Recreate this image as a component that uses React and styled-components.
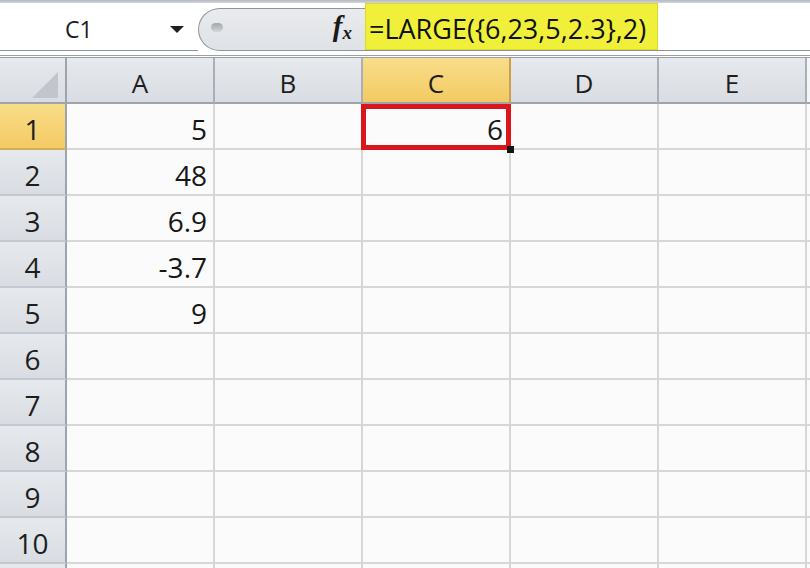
import React from 'react';
import styled, { createGlobalStyle } from 'styled-components';

const GlobalStyle = createGlobalStyle`
  html, body {
    margin: 0;
    padding: 0;
    background: #fff;
  }
  body {
    font-family: "Open Sans", "Liberation Sans", sans-serif;
    overflow: hidden;
  }
`;

const Window = styled.div`
  width: 810px;
  height: 568px;
  overflow: hidden;
  background: #fbfbfb;
  display: flex;
  flex-direction: column;
`;

const TopStrip = styled.div`
  flex: none;
  height: 3px;
  background: linear-gradient(#b4b9c0, #d3d7dc);
`;

const FormulaBar = styled.div`
  flex: none;
  display: flex;
  height: 48px;
  background: #fff;
`;

const NameBox = styled.div`
  width: 198px;
  box-sizing: border-box;
  display: flex;
  align-items: center;
  justify-content: space-between;
  padding: 5px 14px 0 65px;
  border-bottom: 1px solid #8e949b;
  font-size: 23px;
  color: #1c1c1c;
`;

const Arrow = styled.span`
  width: 0;
  height: 0;
  border-left: 7px solid transparent;
  border-right: 7px solid transparent;
  border-top: 7px solid #202020;
`;

const FxArea = styled.div`
  width: 167px;
  box-sizing: border-box;
  margin-top: 5px;
  display: flex;
  align-items: center;
  justify-content: space-between;
  padding: 0 13px 0 12px;
  background: linear-gradient(#e9ebee, #dfe2e6);
  border: 1px solid #8e949b;
  border-right: none;
  border-radius: 22px 0 0 22px;
`;

const Grip = styled.span`
  width: 12px;
  height: 9px;
  margin-top: -5px;
  border-radius: 5px;
  background: linear-gradient(#a3a7ad, #d2d5d9);
`;

const Fx = styled.span`
  font-family: "Liberation Serif", "DejaVu Serif", serif;
  font-style: italic;
  font-weight: bold;
  font-size: 29px;
  color: #1a1a1a;
  margin-top: -6px;
`;

const FxSub = styled.span`
  font-size: 19px;
  position: relative;
  top: 3px;
`;

const FormulaInput = styled.div`
  flex: 1;
  display: flex;
  border-bottom: 1px solid #8e949b;
`;

const Highlight = styled.div`
  display: flex;
  align-items: center;
  padding: 4px 12px 0 4px;
  background: #f0f03a;
  box-shadow: inset 0 0 0 1px #dada2c;
  font-size: 27px;
  color: #111;
  white-space: nowrap;
`;

const Spacer = styled.div`
  flex: none;
  height: 7px;
  box-sizing: border-box;
  background: #fff;
  border-bottom: 3px double #9aa0a7;
`;

const Sheet = styled.div`
  display: grid;
  grid-template-columns: 67px repeat(5, 148px) 1fr;
  grid-auto-rows: 46px;
`;

const headGray = 'linear-gradient(#e6e9ed, #d9dde3)';
const headGold = 'linear-gradient(#f9dd8a, #f3ca63)';

const Corner = styled.div`
  box-sizing: border-box;
  display: flex;
  align-items: flex-end;
  justify-content: flex-end;
  padding: 0 7px 4px 0;
  background: ${headGray};
  border-right: 2px solid #9ea4ab;
  border-bottom: 2px solid #9ea4ab;
`;

const CornerMark = styled.span`
  width: 26px;
  height: 26px;
  background: #c2c6cc;
  clip-path: polygon(100% 0, 100% 100%, 0 100%);
`;

const ColHead = styled.div`
  box-sizing: border-box;
  display: flex;
  align-items: center;
  justify-content: center;
  padding-top: 5px;
  background: ${(p) => (p.$active ? headGold : p.$blank ? '#f4f5f7' : headGray)};
  border-right: 2px solid ${(p) => (p.$active ? '#c9a14c' : '#a9afb6')};
  border-bottom: 2px solid #9ea4ab;
  font-size: 26px;
  color: #1e1e1e;
`;

const RowHead = styled.div`
  box-sizing: border-box;
  display: flex;
  align-items: center;
  justify-content: center;
  padding-top: 6px;
  background: ${(p) => (p.$active ? headGold : headGray)};
  border-right: 2px solid #9ea4ab;
  border-bottom: 2px solid ${(p) => (p.$active ? '#d2ad5a' : '#c4c9cf')};
  font-size: 28px;
  color: #1e1e1e;
`;

const Cell = styled.div`
  position: relative;
  box-sizing: border-box;
  display: flex;
  align-items: center;
  justify-content: flex-end;
  padding: 6px 6px 0 0;
  background: #fbfbfb;
  border-right: 2px solid #d7d7d7;
  border-bottom: 2px solid #d7d7d7;
  font-size: 28px;
  color: #161616;
`;

const Selection = styled.div`
  position: absolute;
  top: 0;
  left: -2px;
  right: -2px;
  bottom: -2px;
  border: 5px solid #d8161c;
  z-index: 2;
  pointer-events: none;
`;

const FillHandle = styled.span`
  position: absolute;
  right: -8px;
  bottom: -8px;
  width: 7px;
  height: 7px;
  background: #151515;
`;

const columns = ['A', 'B', 'C', 'D', 'E'];
const valuesA = ['5', '48', '6.9', '-3.7', '9'];
const rows = Array.from({ length: 11 }, (_, i) => i + 1);

export default function App() {
  return (
    <>
      <GlobalStyle />
      <Window>
        <TopStrip />
        <FormulaBar>
          <NameBox>
            C1
            <Arrow />
          </NameBox>
          <FxArea>
            <Grip />
            <Fx>
              f<FxSub>x</FxSub>
            </Fx>
          </FxArea>
          <FormulaInput>
            <Highlight>=LARGE({'{'}6,23,5,2.3{'}'},2)</Highlight>
          </FormulaInput>
        </FormulaBar>
        <Spacer />
        <Sheet>
          <Corner>
            <CornerMark />
          </Corner>
          {columns.map((c) => (
            <ColHead key={c} $active={c === 'C'}>
              {c}
            </ColHead>
          ))}
          <ColHead $blank />
          {rows.map((r) => (
            <React.Fragment key={r}>
              {/* row 11 only peeks in under the bottom edge, so no label */}
              <RowHead $active={r === 1}>{r <= 10 ? r : ''}</RowHead>
              <Cell>{valuesA[r - 1] || ''}</Cell>
              <Cell />
              <Cell>
                {r === 1 && '6'}
                {r === 1 && (
                  <Selection>
                    <FillHandle />
                  </Selection>
                )}
              </Cell>
              <Cell />
              <Cell />
              <Cell />
            </React.Fragment>
          ))}
        </Sheet>
      </Window>
    </>
  );
}
